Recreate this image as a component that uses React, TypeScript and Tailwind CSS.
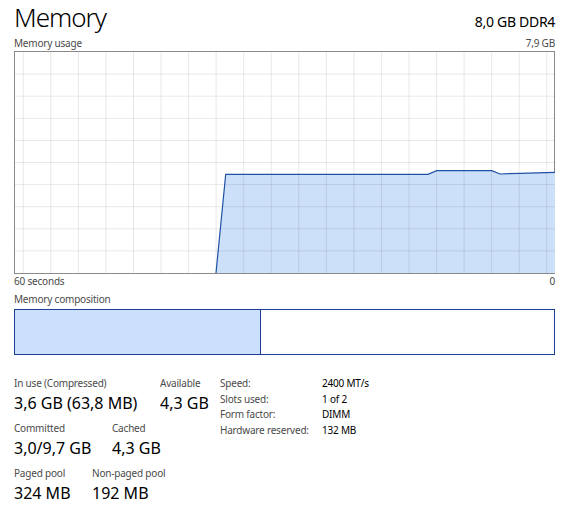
import React from "react";

const FONT = { fontFamily: '"Noto Sans", "Open Sans", sans-serif' };

function Chart() {
  const W = 540;
  const H = 221;
  const vx: number[] = [];
  for (let k = 0; k < 20; k++) vx.push(8.3 + 27.55 * k);
  const hy: number[] = [];
  for (let k = 1; k < 10; k++) hy.push(22.1 * k);
  const pts = [
    [201, 221],
    [210.7, 122.3],
    [413, 122.3],
    [421.7, 118.7],
    [476.7, 118.7],
    [485, 122],
    [505, 121.3],
    [540, 120.3],
  ];
  const line = pts.map((p) => p.join(",")).join(" ");
  const area = line + ` 540,221 201,221`;
  return (
    <svg width={W} height={H} viewBox={`0 0 ${W} ${H}`} className="block">
      <polygon points={area} fill="#cce0fa" />
      {vx.map((x) => (
        <line key={"v" + x} x1={x} x2={x} y1={0} y2={H} stroke="rgba(0,0,0,0.09)" strokeWidth={1} />
      ))}
      {hy.map((y) => (
        <line key={"h" + y} x1={0} x2={W} y1={y} y2={y} stroke="rgba(0,0,0,0.09)" strokeWidth={1} />
      ))}
      <polyline points={line} fill="none" stroke="#1f52a6" strokeWidth={1.2} />
    </svg>
  );
}

function Stat({ label, value, w }: { label: string; value: string; w: string }) {
  return (
    <div className={`flex flex-col ${w}`}>
      <div className="text-[10px] tracking-[-0.2px] leading-[14px] text-[#4a4a4a] whitespace-nowrap">{label}</div>
      <div className="mt-[3px] text-[16px] leading-[20px] text-black whitespace-nowrap">{value}</div>
    </div>
  );
}

export default function App() {
  const rows = [
    ["Speed:", "2400 MT/s"],
    ["Slots used:", "1 of 2"],
    ["Form factor:", "DIMM"],
    ["Hardware reserved:", "132 MB"],
  ];
  return (
    <div className="w-[575px] h-[515px] bg-white overflow-hidden" style={FONT}>
      <div className="flex flex-col pl-[14px] pr-[20px] pt-[2px]">
        <div className="flex items-baseline justify-between h-[30px]">
          <div className="text-[26px] leading-[30px] tracking-[-1px] font-light text-black">Memory</div>
          <div className="text-[14px] leading-[18px] tracking-[-0.3px] text-black">8,0 GB DDR4</div>
        </div>
        <div className="mt-[4px] flex justify-between text-[10px] tracking-[-0.2px] leading-[14px] text-[#4a4a4a]">
          <span>Memory usage</span>
          <span>7,9 GB</span>
        </div>
        <div className="mt-[1px] h-[223px] border border-[#8a8a8a] bg-white">
          <Chart />
        </div>
        <div className="flex justify-between text-[10px] tracking-[-0.2px] leading-[14px] text-[#4a4a4a]">
          <span>60 seconds</span>
          <span>0</span>
        </div>
        <div className="mt-[4px] text-[10px] tracking-[-0.2px] leading-[14px] text-[#4a4a4a]">Memory composition</div>
        <div className="mt-[3px] h-[46px] border border-[#1b3f94] flex">
          <div className="w-[246px] bg-[#cce0fb] border-r border-[#1b3f94]" />
          <div className="flex-1 bg-white" />
        </div>
        <div className="mt-[21px] flex">
          <div className="w-[206px] flex flex-col">
            <div className="flex">
              <Stat label="In use (Compressed)" value="3,6 GB (63,8 MB)" w="w-[146px]" />
              <Stat label="Available" value="4,3 GB" w="w-[60px]" />
            </div>
            <div className="mt-[8px] flex">
              <Stat label="Committed" value="3,0/9,7 GB" w="w-[98px]" />
              <Stat label="Cached" value="4,3 GB" w="w-[60px]" />
            </div>
            <div className="mt-[8px] flex">
              <Stat label="Paged pool" value="324 MB" w="w-[78px]" />
              <Stat label="Non-paged pool" value="192 MB" w="w-[100px]" />
            </div>
          </div>
          <div className="flex flex-col">
            {rows.map(([l, v]) => (
              <div key={l} className="flex text-[10px] tracking-[-0.2px] leading-[15.5px]">
                <span className="w-[102px] text-[#4a4a4a]">{l}</span>
                <span className="text-black">{v}</span>
              </div>
            ))}
          </div>
        </div>
      </div>
    </div>
  );
}
